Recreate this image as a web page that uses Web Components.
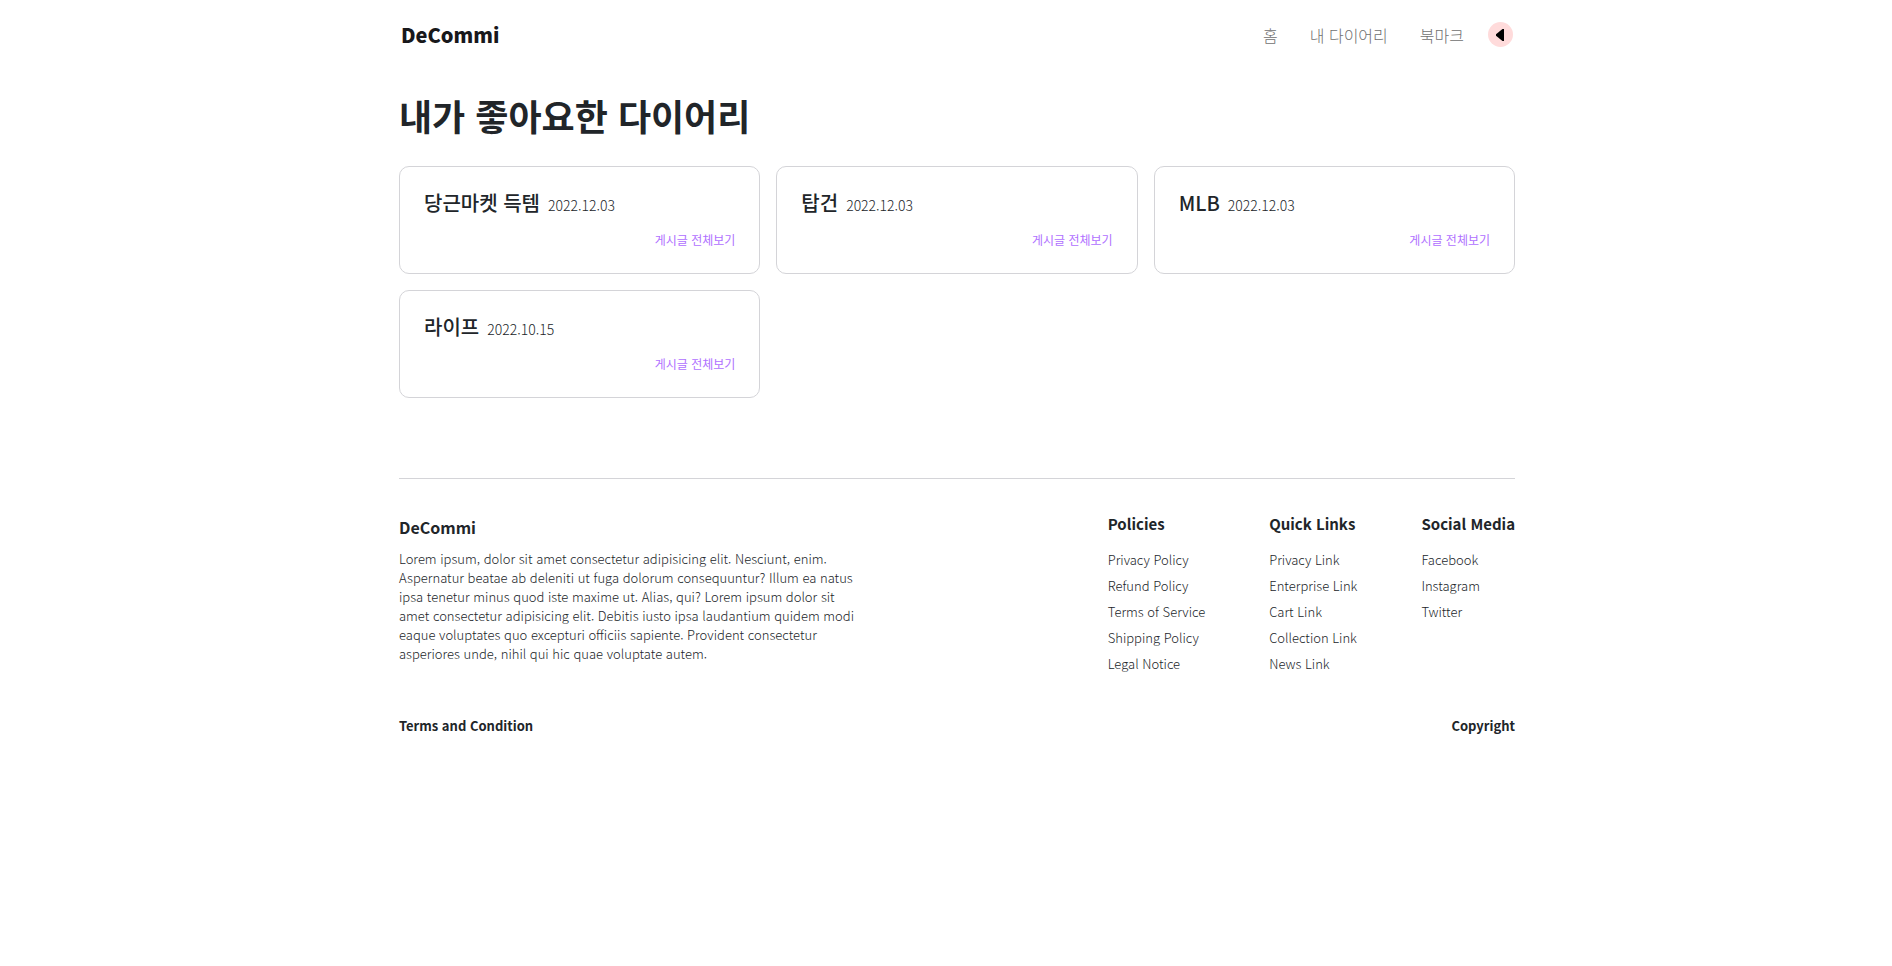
<!DOCTYPE html>
<html lang="ko">
<head>
<meta charset="utf-8">
<meta name="viewport" content="width=device-width, initial-scale=1">
<title>DeCommi</title>
<style>
  body {
    margin: 0;
    background: #fff;
    color: #212529;
    font-family: "Noto Sans CJK KR", "Noto Sans", sans-serif;
    font-weight: 300;
    font-size: 16px;
    line-height: 24px;
  }
</style>
</head>
<body>
<diary-page></diary-page>

<template id="diary-page">
  <style>
    :host { display: block; padding: 0 16px 0 38px; }
    .wrap { max-width: 1116px; margin: 0 auto; }
    h1 { margin: 23px 0 28px; font-size: 36px; line-height: 46px; font-weight: 700; }
    .grid { display: grid; grid-template-columns: repeat(auto-fill, minmax(300px, 1fr)); gap: 16px; }
  </style>
  <div class="wrap">
    <site-header></site-header>
    <main>
      <h1>내가 좋아요한 다이어리</h1>
      <div class="grid">
        <diary-card date="2022.12.03">당근마켓 득템</diary-card>
        <diary-card date="2022.12.03">탑건</diary-card>
        <diary-card date="2022.12.03">MLB</diary-card>
        <diary-card date="2022.10.15">라이프</diary-card>
      </div>
    </main>
    <site-footer></site-footer>
  </div>
</template>

<template id="site-header">
  <style>
    :host { display: block; }
    header { display: flex; align-items: center; justify-content: space-between; height: 69px; padding: 0 2px; }
    a { text-decoration: none; }
    .logo { color: #18181b; font-size: 20px; font-weight: 900; }
    nav { display: flex; align-items: center; }
    nav a { color: #707070; margin-right: 32px; }
    nav a:last-of-type { margin-right: 24px; }
    button { display: grid; place-items: center; width: 25px; height: 25px; padding: 0; border: 0; border-radius: 50%; background: #ffdbdb; cursor: pointer; }
    svg { display: block; }
  </style>
  <header>
    <a class="logo" href="#">DeCommi</a>
    <nav>
      <a href="#">홈</a>
      <a href="#">내 다이어리</a>
      <a href="#">북마크</a>
      <button type="button" aria-label="메뉴 열기">
        <svg width="25" height="25" viewBox="0 0 25 25" aria-hidden="true"><path d="M16 7v12h-1.500l-6.500-5.300v-1.400L14.500 7z"/></svg>
      </button>
    </nav>
  </header>
</template>

<template id="diary-card">
  <style>
    :host { display: block; box-sizing: border-box; padding: 24px; border: 1px solid #d4d4d8; border-radius: 10px; }
    .head { display: flex; align-items: baseline; gap: 8px; }
    h2 { margin: 0; font-size: 20px; line-height: 24px; font-weight: 500; }
    time { font-size: 14px; line-height: 16px; }
    .more { margin-top: 16px; text-align: right; font-size: 12px; line-height: 18px; }
    a { color: #b070ff; font-weight: 400; text-decoration: none; }
  </style>
  <div class="head"><h2><slot></slot></h2><time></time></div>
  <div class="more"><a href="#">게시글 전체보기</a></div>
</template>

<template id="site-footer">
  <style>
    :host { display: block; margin-top: 80px; border-top: 1px solid #d4d4d8; color: #212529; font-size: 13px; }
    .top { display: flex; flex-wrap: wrap; justify-content: space-between; gap: 32px; padding-top: 33px; }
    .about { flex: 0 1 460px; }
    h2 { margin: 3px 0 10px; font-size: 16px; line-height: 24px; font-weight: 700; }
    p { margin: 0; line-height: 19px; }
    .links { display: flex; flex-wrap: wrap; gap: 64px; }
    .bottom { display: flex; justify-content: space-between; margin-top: 40px; font-weight: 700; }
    .bottom a { color: inherit; text-decoration: none; }
  </style>
  <footer>
    <div class="top">
      <section class="about">
        <h2>DeCommi</h2>
        <p>Lorem ipsum, dolor sit amet consectetur adipisicing elit. Nesciunt, enim. Aspernatur beatae ab deleniti ut fuga dolorum consequuntur? Illum ea natus ipsa tenetur minus quod iste maxime ut. Alias, qui? Lorem ipsum dolor sit amet consectetur adipisicing elit. Debitis iusto ipsa laudantium quidem modi eaque voluptates quo excepturi officiis sapiente. Provident consectetur asperiores unde, nihil qui hic quae voluptate autem.</p>
      </section>
      <div class="links">
        <link-list heading="Policies">
          <a href="#">Privacy Policy</a><a href="#">Refund Policy</a><a href="#">Terms of Service</a><a href="#">Shipping Policy</a><a href="#">Legal Notice</a>
        </link-list>
        <link-list heading="Quick Links">
          <a href="#">Privacy Link</a><a href="#">Enterprise Link</a><a href="#">Cart Link</a><a href="#">Collection Link</a><a href="#">News Link</a>
        </link-list>
        <link-list heading="Social Media">
          <a href="#">Facebook</a><a href="#">Instagram</a><a href="#">Twitter</a>
        </link-list>
      </div>
    </div>
    <div class="bottom"><a href="#">Terms and Condition</a><a href="#">Copyright</a></div>
  </footer>
</template>

<template id="link-list">
  <style>
    :host { display: block; }
    h3 { margin: 0 0 13px; font-size: 15px; line-height: 24px; font-weight: 700; }
    .items { display: flex; flex-direction: column; gap: 5px; line-height: 21px; }
    ::slotted(a) { color: inherit; text-decoration: none; }
  </style>
  <h3></h3>
  <div class="items"><slot></slot></div>
</template>

<script>
  class TemplateElement extends HTMLElement {
    constructor() {
      super();
      const template = document.getElementById(this.localName);
      this.attachShadow({ mode: "open" }).append(template.content.cloneNode(true));
    }
  }
  class LinkList extends TemplateElement {
    connectedCallback() {
      this.shadowRoot.querySelector("h3").textContent = this.getAttribute("heading");
    }
  }
  class DiaryCard extends TemplateElement {
    connectedCallback() {
      const time = this.shadowRoot.querySelector("time");
      time.textContent = this.getAttribute("date");
      time.dateTime = time.textContent.replaceAll(".", "-");
    }
  }
  customElements.define("link-list", LinkList);
  customElements.define("diary-card", DiaryCard);
  customElements.define("site-header", class extends TemplateElement {});
  customElements.define("site-footer", class extends TemplateElement {});
  customElements.define("diary-page", class extends TemplateElement {});
</script>
</body>
</html>
